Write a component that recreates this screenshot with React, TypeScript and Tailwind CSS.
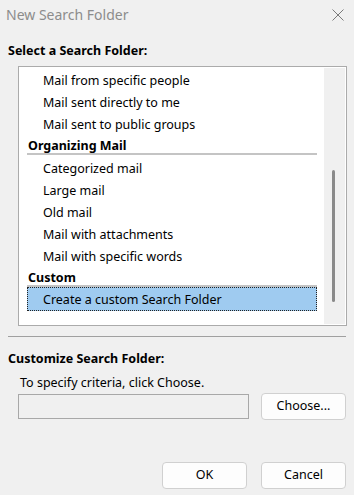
import React from "react";

const font = { fontFamily: '"Noto Sans", "Open Sans", sans-serif' };

function Item({ children }: { children: React.ReactNode }) {
  return <div className="h-[22px] pt-[2px] leading-[20px] pl-[24px] text-black whitespace-nowrap">{children}</div>;
}

function Header({ children }: { children: React.ReactNode }) {
  return (
    <div>
      <div className="h-[18px] leading-[21px] pl-[9px] font-bold text-black whitespace-nowrap">{children}</div>
      <div className="ml-[8px] w-[290px] h-[2px] bg-[#c4c4c4]" />
    </div>
  );
}

export default function App() {
  return (
    <div className="w-[354px] h-[495px] bg-[#f0f0f0] text-[12.5px] flex flex-col" style={font}>
      {/* Title bar */}
      <div className="h-[28px] flex items-center justify-between pl-[6px] pr-[10px]">
        <span className="text-[14px] text-[#8c8c8c]">New Search Folder</span>
        <svg width="12" height="12" viewBox="0 0 12 12" className="mt-[1px]">
          <path d="M0.5 0.5 L11.5 11.5 M11.5 0.5 L0.5 11.5" stroke="#7a7a7a" strokeWidth="1" fill="none" />
        </svg>
      </div>

      <div className="mt-[15px] h-[16px] leading-[16px] pl-[8px] font-bold text-black">Select a Search Folder:</div>

      {/* List box */}
      <div className="mt-[7px] ml-[18px] w-[329px] h-[260px] border border-[#ababab] bg-white flex">
        <div className="flex-1 pt-[2px] overflow-hidden">
          <Item>Mail from specific people</Item>
          <Item>Mail sent directly to me</Item>
          <Item>Mail sent to public groups</Item>
          <Header>Organizing Mail</Header>
          <div className="mt-[2px]">
            <Item>Categorized mail</Item>
          </div>
          <Item>Large mail</Item>
          <Item>Old mail</Item>
          <Item>Mail with attachments</Item>
          <Item>Mail with specific words</Item>
          <Header>Custom</Header>
          <div className="ml-[8px] w-[290px] h-[24px] pt-[1px] leading-[22px] bg-[#9fcbf0] border border-dotted border-[#222] pl-[15px] text-black whitespace-nowrap">
            Create a custom Search Folder
          </div>
        </div>
        <div className="w-[21px] bg-[#f0f0f0] my-[1px] mr-[1px] flex flex-col pt-[102px]">
          <div className="ml-[8px] w-[3px] h-[132px] rounded-full bg-[#8a8a8a]" />
        </div>
      </div>

      <div className="mt-[10px] ml-[8px] w-[338px] h-[1px] bg-[#a0a0a0]" />

      <div className="mt-[14px] h-[16px] leading-[16px] pl-[8px] font-bold text-black">Customize Search Folder:</div>
      <div className="mt-[8px] h-[16px] leading-[16px] pl-[20px] text-black">To specify criteria, click Choose.</div>

      <div className="mt-[2px] flex items-center pl-[18px] pr-[8px] justify-between">
        <div className="w-[231px] h-[25px] border border-[#a8a8a8] bg-[#f0f0f0]" />
        <button className="w-[85px] h-[27px] bg-[#fdfdfd] border border-[#d0d0d0] rounded-[4px] text-black text-[12.5px]" style={font}>
          Choose...
        </button>
      </div>

      <div className="mt-[42px] flex justify-end gap-[14px] pr-[8px]">
        <button className="w-[85px] h-[27px] bg-[#fdfdfd] border border-[#d0d0d0] rounded-[4px] text-black text-[12.5px]" style={font}>
          OK
        </button>
        <button className="w-[85px] h-[27px] bg-[#fdfdfd] border border-[#d0d0d0] rounded-[4px] text-black text-[12.5px]" style={font}>
          Cancel
        </button>
      </div>
    </div>
  );
}
